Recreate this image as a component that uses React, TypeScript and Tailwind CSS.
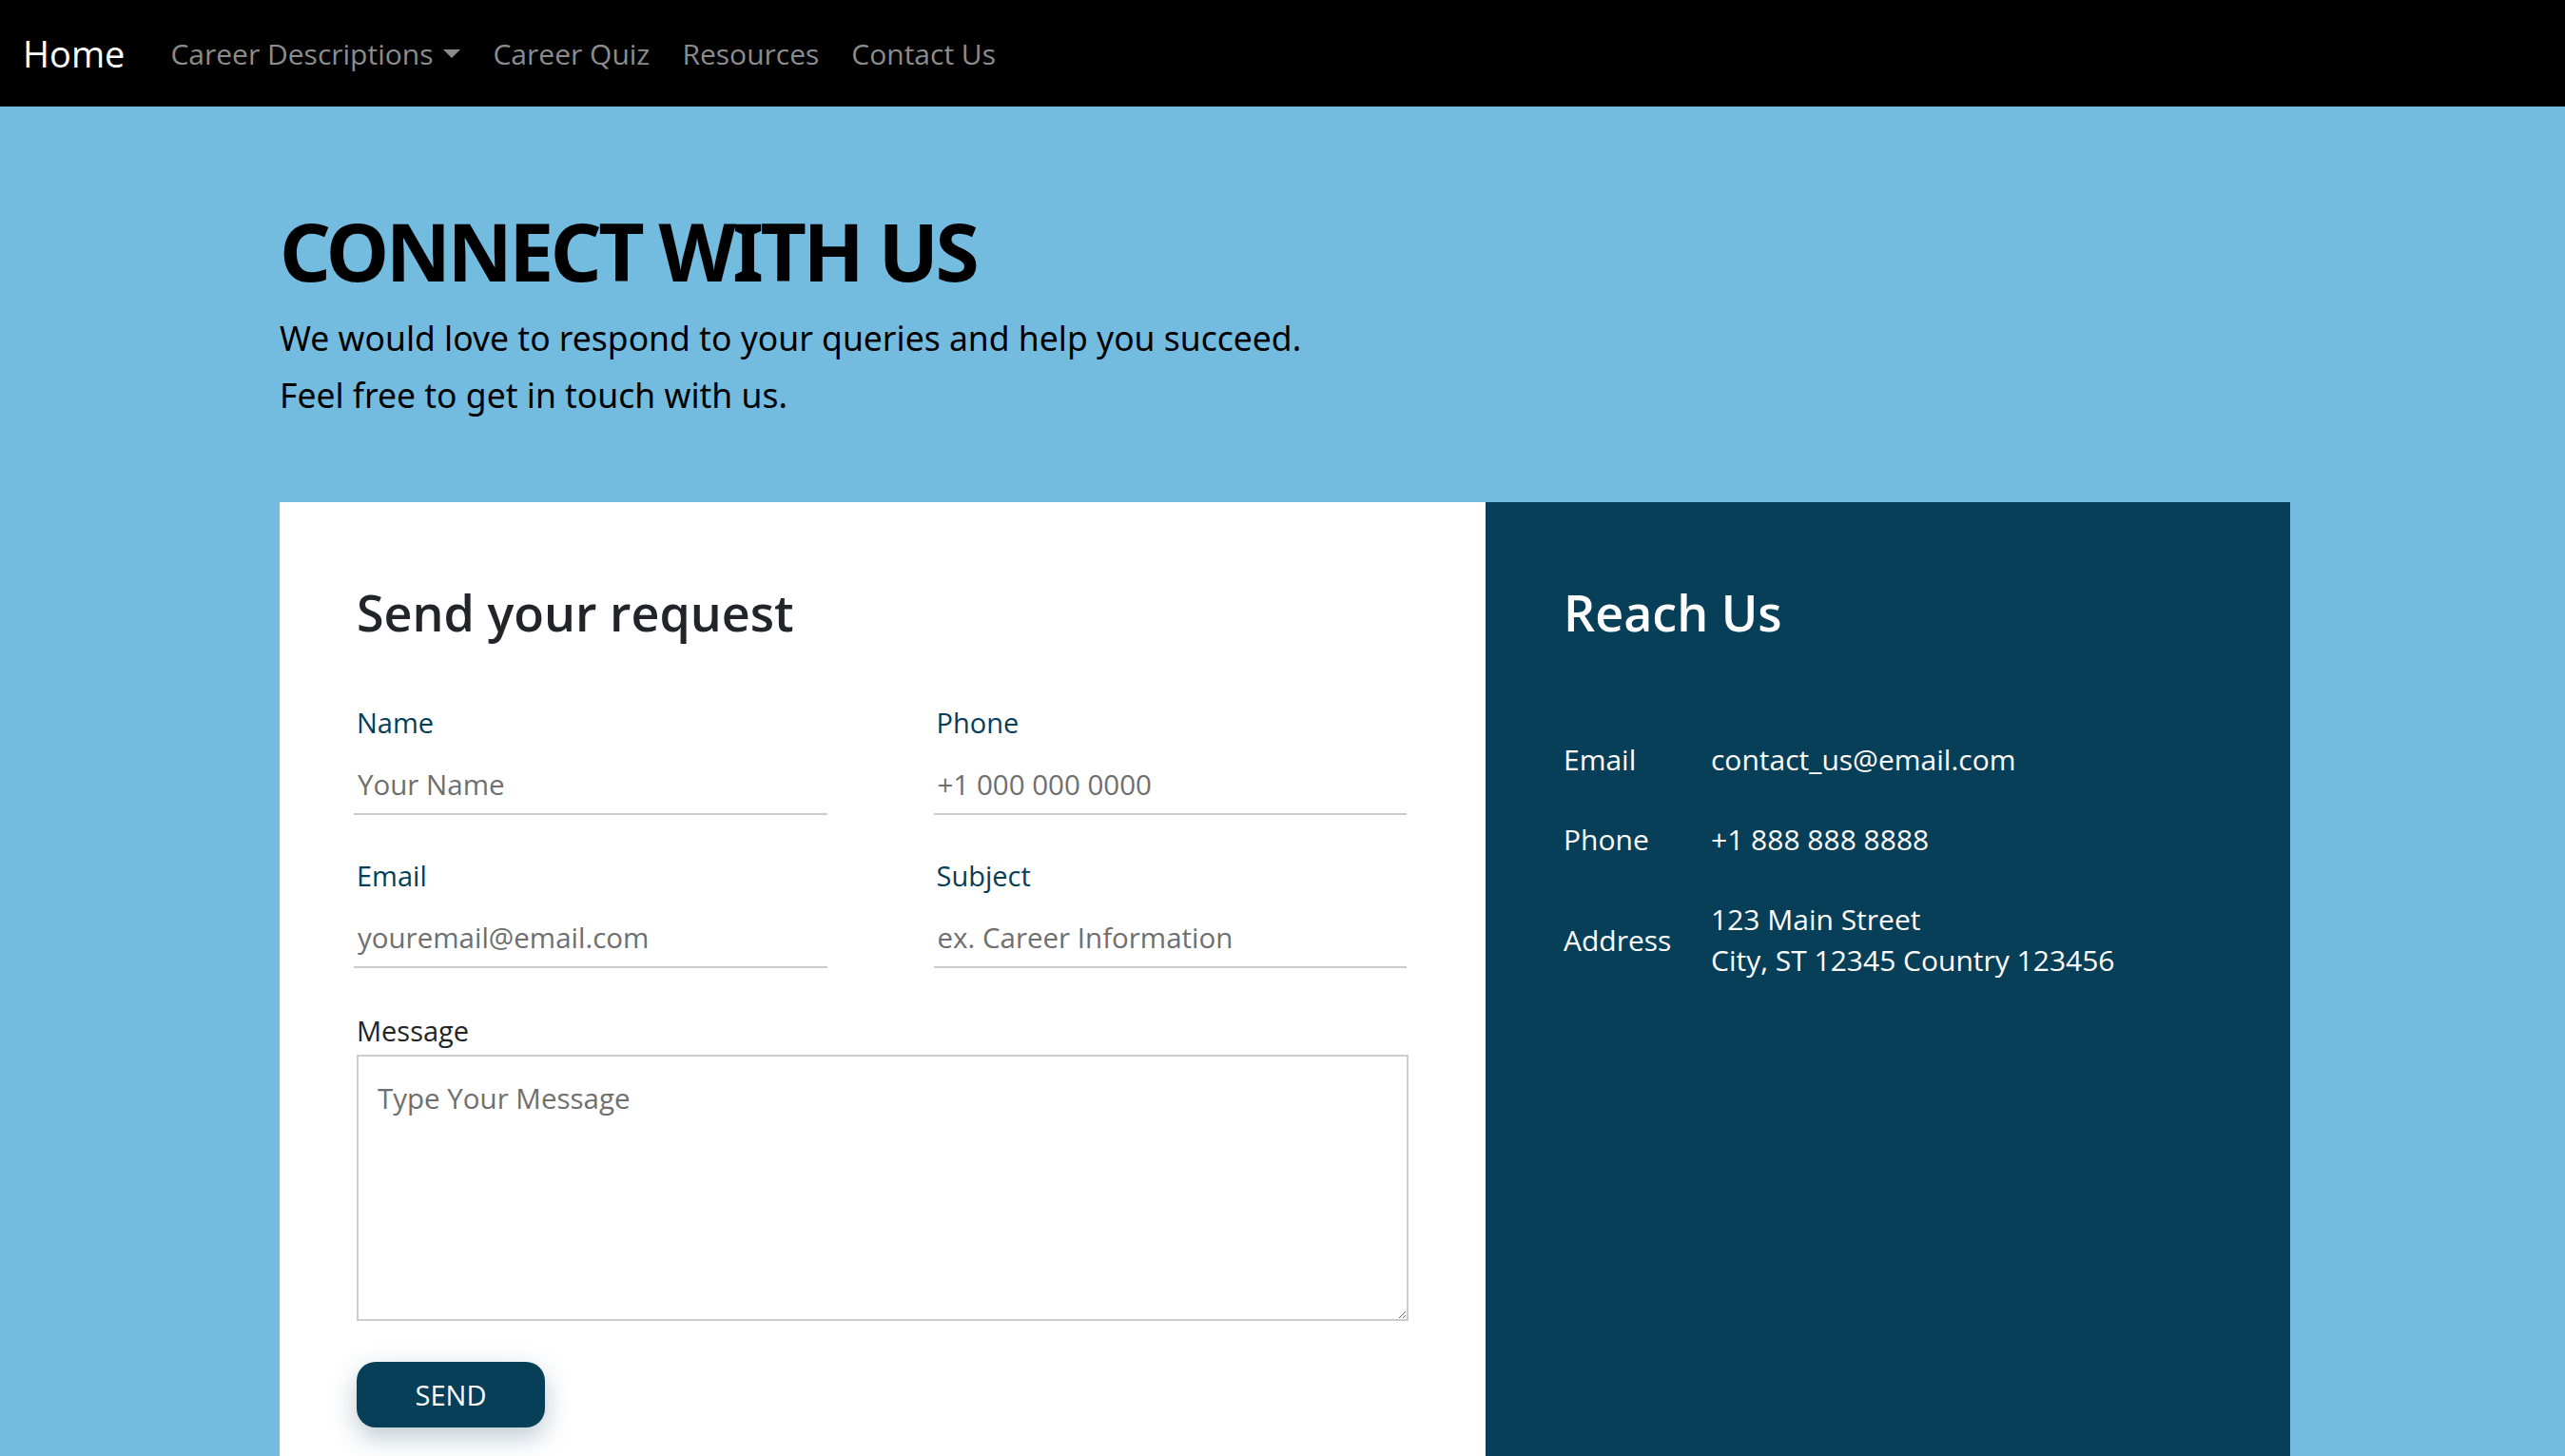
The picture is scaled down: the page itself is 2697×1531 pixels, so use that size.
import React from "react";

const seg = { fontFamily: '"Open Sans", "Noto Sans", sans-serif' };
const ubu = { fontFamily: '"Noto Sans", "Open Sans", sans-serif' };

function Field({ label, placeholder }: { label: string; placeholder: string }) {
  return (
    <div className="flex flex-col">
      <label className="text-[29px] leading-[40px] text-[#073e58] pl-[3px]">{label}</label>
      <input
        placeholder={placeholder}
        className="mt-[13px] h-[64px] w-full border-b-2 border-[#cccccc] bg-transparent pl-[4px] text-[29.5px] text-[#212529] outline-none placeholder:text-[#6f6f6f]"
        style={seg}
      />
    </div>
  );
}

function InfoRow({ label, children }: { label: string; children: React.ReactNode }) {
  return (
    <div className="flex items-center text-[30px] leading-[43px] text-white">
      <div className="w-[155px] shrink-0">{label}</div>
      <div>{children}</div>
    </div>
  );
}

export default function App() {
  return (
    <div className="min-h-screen bg-[#74bcdf]" style={seg}>
      <nav className="flex h-[112px] items-center bg-black pl-[24px]">
        <span className="text-[38px] text-white">Home</span>
        <div className="ml-[48px] flex items-center gap-[34px] text-[30px] text-[#8c8c8c]">
          <span className="flex items-center">
            Career Descriptions
            <span className="ml-[11px] inline-block h-0 w-0 border-x-[9px] border-t-[9px] border-x-transparent border-t-[#8c8c8c]" />
          </span>
          <span>Career Quiz</span>
          <span>Resources</span>
          <span>Contact Us</span>
        </div>
      </nav>

      <main className="ml-[294px] w-[2114px] pt-[99px]">
        <h1 className="text-[84px] font-bold leading-[106px] tracking-[-3.5px] text-black" style={ubu}>
          CONNECT WITH US
        </h1>
        <div className="mt-[8px] text-[35.5px] leading-[60px] text-black" style={ubu}>
          <p>We would love to respond to your queries and help you succeed.</p>
          <p>Feel free to get in touch with us.</p>
        </div>

        <div className="mt-[83px] flex">
          <section className="w-[1268px] bg-white px-[81px] pt-[79px] pb-[120px]">
            <h2 className="text-[52px] font-semibold leading-[74px] text-[#212529]">Send your request</h2>
            <div className="mt-[59px] grid grid-cols-2 gap-x-[112px] gap-y-[44px] pr-[2px] -ml-[3px]">
              <Field label="Name" placeholder="Your Name" />
              <Field label="Phone" placeholder="+1 000 000 0000" />
              <Field label="Email" placeholder="youremail@email.com" />
              <Field label="Subject" placeholder="ex. Career Information" />
            </div>
            <div className="mt-[46px] flex flex-col">
              <label className="text-[29px] leading-[40px] text-[#212529]">Message</label>
              <textarea
                placeholder="Type Your Message"
                className="mt-[5px] h-[280px] w-[1106px] border-2 border-[#cccccc] px-[20px] pt-[24px] text-[29.5px] leading-[40px] outline-none placeholder:text-[#6f6f6f]"
                style={seg}
              />
            </div>
            <button className="mt-[43px] h-[69px] w-[198px] rounded-[20px] bg-[#073e58] text-[29px] text-white shadow-[0_10px_28px_rgba(7,62,88,0.28)]">
              SEND
            </button>
          </section>

          <section className="w-[846px] bg-[#073e58] px-[82px] pt-[79px]">
            <h2 className="text-[52px] font-semibold leading-[74px] text-white">Reach Us</h2>
            <div className="mt-[96px] flex flex-col gap-[41px]">
              <InfoRow label="Email">contact_us@email.com</InfoRow>
              <InfoRow label="Phone">+1 888 888 8888</InfoRow>
              <InfoRow label="Address">
                <div>123 Main Street</div>
                <div>City, ST 12345 Country 123456</div>
              </InfoRow>
            </div>
          </section>
        </div>
      </main>
    </div>
  );
}
